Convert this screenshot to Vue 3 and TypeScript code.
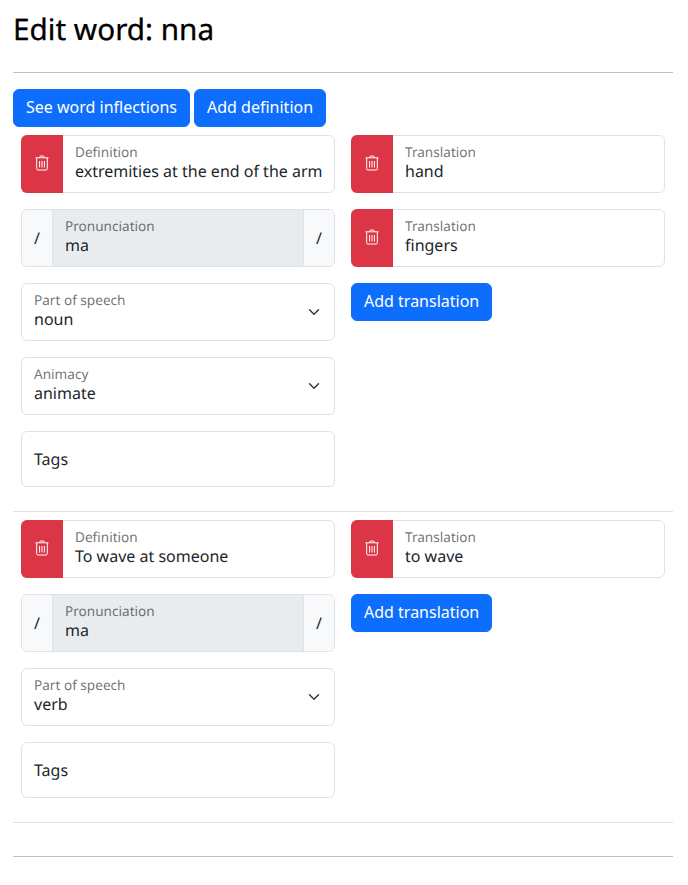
<script setup lang="ts">
interface Definition {
  definition: string
  pronunciation: string
  selects: { label: string; value: string }[]
  translations: string[]
}

const definitions: Definition[] = [
  {
    definition: 'extremities at the end of the arm',
    pronunciation: 'ma',
    selects: [
      { label: 'Part of speech', value: 'noun' },
      { label: 'Animacy', value: 'animate' },
    ],
    translations: ['hand', 'fingers'],
  },
  {
    definition: 'To wave at someone',
    pronunciation: 'ma',
    selects: [{ label: 'Part of speech', value: 'verb' }],
    translations: ['to wave'],
  },
]
</script>

<template>
  <div class="page">
    <h1 class="title">Edit word: nna</h1>
    <hr class="rule" />
    <div class="actions">
      <button class="btn">See word inflections</button>
      <button class="btn">Add definition</button>
    </div>

    <template v-for="(def, index) in definitions" :key="index">
      <div class="row">
        <div class="col">
          <div class="field">
            <div class="delete">
              <svg width="14" height="16" viewBox="0 0 14 16" fill="none" stroke="currentColor">
                <path d="M4.5 2.5 5.4 1h3.2l.9 1.5M.5 2.8h13M1.7 3v10.8c0 .7.5 1.2 1.2 1.2h8.2c.7 0 1.2-.5 1.2-1.2V3M4.6 6v6.5M7 6v6.5M9.4 6v6.5" />
              </svg>
            </div>
            <div class="float">
              <span class="label">Definition</span>
              <span class="value">{{ def.definition }}</span>
            </div>
          </div>

          <div class="field">
            <div class="addon left">/</div>
            <div class="float disabled">
              <span class="label">Pronunciation</span>
              <span class="value">{{ def.pronunciation }}</span>
            </div>
            <div class="addon right">/</div>
          </div>

          <div v-for="sel in def.selects" :key="sel.label" class="field select">
            <div class="float">
              <span class="label">{{ sel.label }}</span>
              <span class="value">{{ sel.value }}</span>
            </div>
            <svg class="chevron" width="16" height="12" viewBox="0 0 21.33 16" fill="none">
              <path d="m4.67 5 6 6 6-6" stroke="#343a40" stroke-width="2" stroke-linecap="round" stroke-linejoin="round" />
            </svg>
          </div>

          <div class="tags">Tags</div>
        </div>

        <div class="col">
          <div v-for="tr in def.translations" :key="tr" class="field">
            <div class="delete">
              <svg width="14" height="16" viewBox="0 0 14 16" fill="none" stroke="currentColor">
                <path d="M4.5 2.5 5.4 1h3.2l.9 1.5M.5 2.8h13M1.7 3v10.8c0 .7.5 1.2 1.2 1.2h8.2c.7 0 1.2-.5 1.2-1.2V3M4.6 6v6.5M7 6v6.5M9.4 6v6.5" />
              </svg>
            </div>
            <div class="float">
              <span class="label">Translation</span>
              <span class="value">{{ tr }}</span>
            </div>
          </div>
          <button class="btn add">Add translation</button>
        </div>
      </div>
      <hr class="rule light" />
    </template>

    <hr class="rule last" />
  </div>
</template>

<style scoped>
.page {
  padding: 11px 15px 0 13px;
  font-family: 'Noto Sans', sans-serif;
  font-size: 16px;
  line-height: 1.5;
  color: #212529;
  text-rendering: geometricPrecision;
}

.title {
  margin: 0 0 26px;
  font-size: 29.7px;
  font-weight: 400;
  line-height: 35px;
  color: #000;
  -webkit-text-stroke: 0.3px #000;
}

.rule {
  margin: 0;
  border: 0;
  border-top: 1px solid #bfbfbf;
}

.rule.light {
  border-top-color: #dee2e6;
}

.rule.last {
  margin-top: 33px;
}

.actions {
  display: flex;
  gap: 4px;
  margin-top: 16px;
  margin-bottom: 8px;
}

.btn {
  height: 38px;
  padding: 0 12px 2px;
  border: 1px solid #0d6efd;
  border-radius: 6px;
  background: #0d6efd;
  color: #fff;
  font-family: inherit;
  font-size: 16px;
}

.add {
  align-self: flex-start;
}

.row {
  display: grid;
  grid-template-columns: 1fr 1fr;
  padding-bottom: 8px;
}

.row + .rule + .row {
  padding-top: 8px;
}

.col {
  display: flex;
  flex-direction: column;
  padding: 0 8px;
}

.field {
  display: flex;
  height: 58px;
  margin-bottom: 16px;
  border: 1px solid #dee2e6;
  border-radius: 6px;
  box-sizing: border-box;
  background: #fff;
}

.select {
  position: relative;
}

.chevron {
  position: absolute;
  right: 12px;
  top: 22px;
}

.delete {
  display: flex;
  flex: none;
  width: 42px;
  margin: -1px 0 -1px -1px;
  align-items: center;
  justify-content: center;
  border-radius: 6px 0 0 6px;
  background: #dc3545;
  color: #fff;
}

.delete svg {
  margin-bottom: 3px;
}

.float {
  display: flex;
  flex: 1;
  min-width: 0;
  flex-direction: column;
  padding: 6px 0 0 12px;
  white-space: nowrap;
  overflow: hidden;
}

.disabled {
  background: #e9ecef;
}

.label {
  font-size: 13.6px;
  line-height: 20px;
  color: rgba(33, 37, 41, 0.65);
}

.value {
  line-height: 24px;
  margin-top: -3px;
}

.addon {
  display: flex;
  flex: none;
  width: 30px;
  align-items: center;
  justify-content: center;
  background: #f8f9fa;
}

.left {
  border-right: 1px solid #dee2e6;
  border-radius: 5px 0 0 5px;
}

.right {
  border-left: 1px solid #dee2e6;
  border-radius: 0 5px 5px 0;
}

.tags {
  display: flex;
  height: 56px;
  margin-bottom: 16px;
  padding-left: 12px;
  align-items: center;
  border: 1px solid #dee2e6;
  border-radius: 6px;
  box-sizing: border-box;
}
</style>
